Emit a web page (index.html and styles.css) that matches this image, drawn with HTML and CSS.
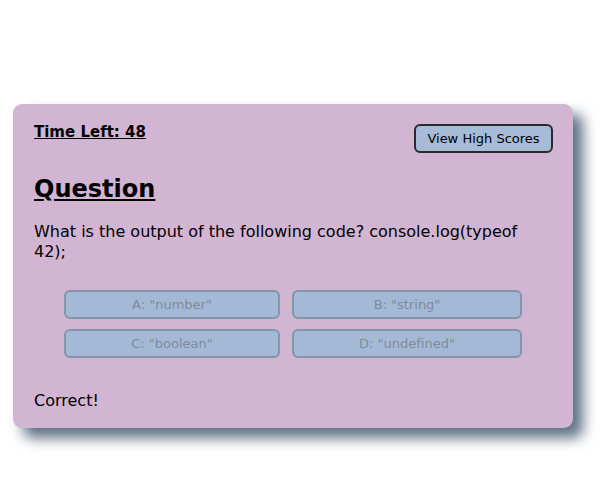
FILE: index.html
```html
<!DOCTYPE html>
<html>
<head>
<meta charset="utf-8">
<link rel="stylesheet" href="styles.css">
</head>
<body>
<div class="card">
  <div class="header">
    <span class="timer">Time Left: 48</span>
    <button class="scores">View High Scores</button>
  </div>
  <h2 class="title">Question</h2>
  <p class="question">What is the output of the following code? console.log(typeof 42);</p>
  <div class="choices">
    <button class="choice" disabled>A: "number"</button>
    <button class="choice" disabled>B: "string"</button>
    <button class="choice" disabled>C: "boolean"</button>
    <button class="choice" disabled>D: "undefined"</button>
  </div>
  <p class="result">Correct!</p>
</div>
</body>
</html>
```
FILE: styles.css
```css
html, body {
  margin: 0;
  padding: 0;
  background: #ffffff;
  font-family: "DejaVu Sans", Verdana, sans-serif;
  color: #000;
}
body {
  min-height: 490px;
  padding-bottom: 1px;
  box-sizing: border-box;
}
.card {
  box-sizing: border-box;
  width: 560px;
  height: 324px;
  margin: 104px 0 0 13px;
  padding: 20px 20px 20px 21px;
  background: #d2b5d2;
  border-radius: 9px;
  box-shadow: 10px 10px 14px #5d7083;
}
.header {
  display: flex;
  justify-content: space-between;
  align-items: flex-start;
  height: 29px;
}
.timer {
  font-size: 15px;
  font-weight: bold;
  text-decoration: underline;
  line-height: 17px;
}
.scores {
  box-sizing: border-box;
  height: 29px;
  width: 139px;
  padding: 0;
  font-family: "DejaVu Sans", Verdana, sans-serif;
  font-size: 13px;
  color: #000;
  background: #a5bbd7;
  border: 2px solid #2a2a2a;
  border-radius: 6px;
}
.title {
  margin: 22px 0 0;
  font-size: 24px;
  font-weight: bold;
  text-decoration: underline;
  line-height: 29px;
}
.question {
  margin: 18px 0 0;
  font-size: 16px;
  line-height: 20px;
  padding-right: 10px;
}
.choices {
  display: grid;
  grid-template-columns: 216px 230px;
  column-gap: 12px;
  row-gap: 10px;
  margin: 28px 0 0 30px;
}
.choice {
  box-sizing: border-box;
  height: 29px;
  padding: 0;
  font-family: "DejaVu Sans", Verdana, sans-serif;
  font-size: 13px;
  color: #7e8b9b;
  background: #a4b9d6;
  border: 2px solid #8195ab;
  border-radius: 6px;
}
.result {
  margin: 33px 0 0;
  font-size: 16px;
  line-height: 20px;
}
```
